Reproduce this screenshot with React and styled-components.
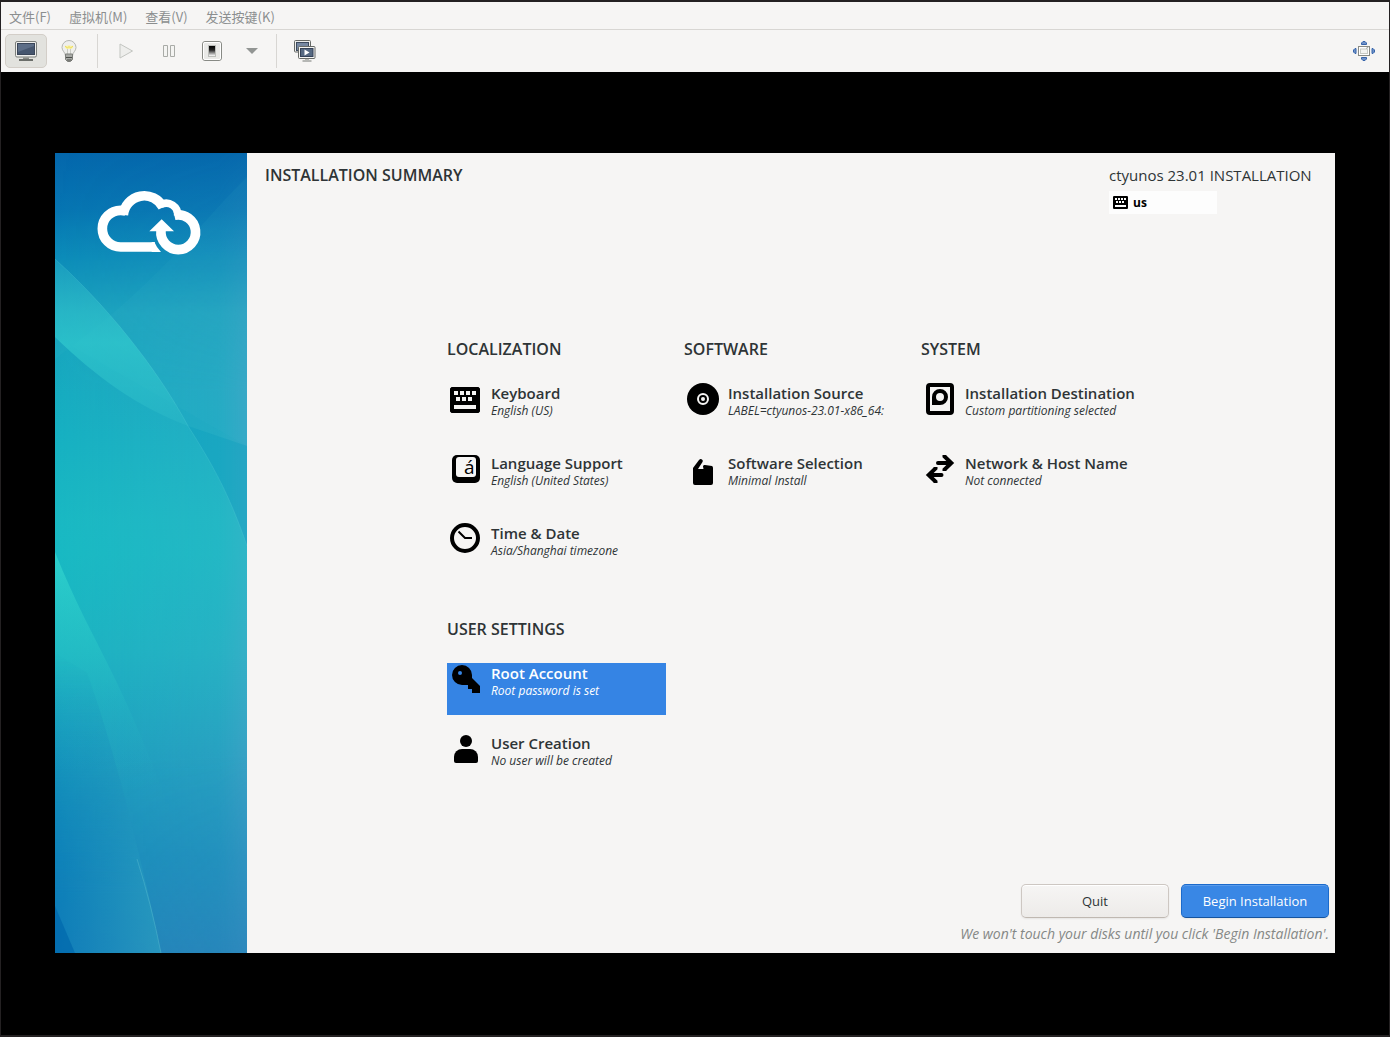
import React, { useState } from 'react';
import styled, { createGlobalStyle, ThemeProvider } from 'styled-components';

const theme = {
  colors: {
    frame: '#242122',
    surface: '#f6f5f4',
    border: '#d8d6d3',
    text: '#2e3436',
    textMuted: '#8b8e8f',
    hint: '#858886',
    primary: '#3584e4',
  },
  fonts: {
    ui: '"Open Sans", "Noto Sans", sans-serif',
    menu: '"Noto Sans CJK SC", sans-serif',
  },
};

const GlobalStyle = createGlobalStyle`
  *, *::before, *::after {
    box-sizing: border-box;
  }

  body {
    margin: 0;
    background-color: #000;
  }

  button {
    font-family: inherit;
    cursor: pointer;
  }

  svg {
    display: block;
    flex-shrink: 0;
  }
`;

const Window = styled.div`
  display: flex;
  flex-direction: column;
  min-height: 100vh;
  border: 1px solid ${props => props.theme.colors.frame};
  border-width: 2px 1px;
  background-color: #000;
  color: ${props => props.theme.colors.text};
  font-family: ${props => props.theme.fonts.ui};
`;

const MenuBar = styled.nav`
  display: flex;
  gap: 2px;
  height: 28px;
  border-bottom: 1px solid ${props => props.theme.colors.border};
  background-color: ${props => props.theme.colors.surface};
`;

const MenuItem = styled.button`
  padding: 2px 8px 0;
  border: none;
  background-color: transparent;
  color: ${props => props.theme.colors.textMuted};
  && {
    font-family: ${props => props.theme.fonts.menu};
  }
  font-size: 13px;
  line-height: 20px;
  white-space: nowrap;
`;

const ToolBar = styled.div`
  display: flex;
  align-items: center;
  gap: 1px;
  height: 42px;
  padding: 0 4px;
  background-color: ${props => props.theme.colors.surface};
`;

const ToolButton = styled.button`
  display: flex;
  align-items: center;
  justify-content: center;
  width: ${props => (props.$narrow ? '35px' : '42px')};
  height: 34px;
  padding: 0;
  border: 1px solid ${props => (props.$pressed ? '#d3cec8' : 'transparent')};
  border-radius: 5px;
  background-color: ${props => (props.$pressed ? '#e2e2de' : 'transparent')};
`;

const ToolSeparator = styled.div`
  width: 1px;
  height: 34px;
  margin: 0 6px;
  background-color: ${props => props.theme.colors.border};
`;

const Spacer = styled.div`
  flex: 1;
`;

const Display = styled.main`
  display: flex;
  flex: 1;
  padding: 81px 54px 82px;
  background-color: #000;
`;

const Installer = styled.section`
  display: flex;
  flex: 1;
  background-color: ${props => props.theme.colors.surface};
`;

const Brand = styled.aside`
  display: grid;
  flex: 0 0 192px;
  overflow: hidden;

  > * {
    grid-area: 1 / 1;
  }

  .art {
    width: 100%;
    height: 100%;
    min-height: 0;
  }

  .logo {
    margin: 36px 0 0 41px;
  }
`;

const Hub = styled.div`
  display: flex;
  flex: 1;
  flex-direction: column;
  min-width: 0;
`;

const HubHeader = styled.header`
  display: flex;
  justify-content: space-between;
  padding: 10px 18px 0;
`;

const HubTitle = styled.h1`
  margin: 0;
  font-size: 16px;
  font-weight: 600;
  line-height: 24px;
`;

const Product = styled.div`
  min-width: 208px;
  font-size: 15px;
  line-height: 24px;
`;

const LayoutIndicator = styled.button`
  display: flex;
  align-items: center;
  gap: 5px;
  width: 108px;
  height: 23px;
  margin-top: 4px;
  padding: 0 4px;
  border: none;
  background-color: #fdfdfd;
  color: #000;
  font-size: 12px;
  font-weight: 700;
`;

const Categories = styled.div`
  display: grid;
  grid-template-columns: repeat(3, 219px);
  justify-content: center;
  gap: 42px 18px;
  flex: 1;
  align-content: start;
  padding: 123px 0 24px 5px;
`;

const Category = styled.section`
  display: flex;
  flex-direction: column;
  gap: 18px;
`;

const CategoryTitle = styled.h2`
  margin: 0 0 4px;
  font-size: 16px;
  font-weight: 600;
  line-height: 24px;
`;

const Spoke = styled.button`
  display: flex;
  align-items: flex-start;
  gap: 9px;
  height: 52px;
  padding: 0 3px;
  border: none;
  background-color: ${props => (props.$selected ? props.theme.colors.primary : 'transparent')};
  color: ${props => (props.$selected ? '#fff' : props.theme.colors.text)};
  text-align: left;
`;

const SpokeText = styled.span`
  display: flex;
  flex-direction: column;
  min-width: 0;
  white-space: nowrap;
`;

const SpokeTitle = styled.span`
  font-size: 15px;
  font-weight: 600;
  line-height: 20px;
`;

const SpokeStatus = styled.span`
  font-size: 12px;
  font-style: italic;
  line-height: 16px;
`;

const HubFooter = styled.footer`
  display: flex;
  flex-direction: column;
  align-items: flex-end;
  gap: 6px;
  padding: 0 6px 9px;
`;

const Actions = styled.div`
  display: flex;
  gap: 12px;
`;

const ActionButton = styled.button`
  width: 148px;
  height: 34px;
  border: 1px solid ${props => (props.$primary ? '#1b6acb' : '#cdc7c2')};
  border-bottom-color: ${props => (props.$primary ? '#15539e' : '#bfb8b1')};
  border-radius: 5px;
  background: ${props => (props.$primary ? '#3987e5' : 'linear-gradient(#f6f5f4, #edebe9)')};
  box-shadow: inset 0 1px ${props => (props.$primary ? '#5a9bea' : '#fff')}, 0 1px 2px rgba(0, 0, 0, 0.07);
  color: ${props => (props.$primary ? '#fff' : props.theme.colors.text)};
  font-size: 13px;
`;

const Hint = styled.p`
  margin: 0;
  color: ${props => props.theme.colors.hint};
  font-size: 14px;
  font-style: italic;
  line-height: 20px;
`;

const MonitorIcon = () => (
  <svg width="24" height="22" viewBox="0 0 24 22">
    <rect x="1.5" y="1.5" width="21" height="15.5" rx="1.5" fill="#eeeeec" stroke="#7b7e7b" />
    <rect x="3.5" y="3.5" width="17" height="11" fill="#46566e" stroke="#3a4659" />
    <path d="M4 4H20V6L4 12Z" fill="#7486a0" opacity=".5" />
    <path d="M9 17.5H15V19H9Z" fill="#888a85" />
    <path d="M5 20H19" stroke="#6b6e6a" strokeWidth="2" />
  </svg>
);

const BulbIcon = () => (
  <svg width="18" height="24" viewBox="0 0 18 24">
    <path d="M9 1.5A7 7 0 0 0 2 8.5C2 12 5.5 13.5 5.5 17H12.5C12.5 13.5 16 12 16 8.5A7 7 0 0 0 9 1.5Z" fill="#efefed" stroke="#b4b6b2" />
    <path d="M4.5 8Q9 4.5 13.5 8L11.5 10H6.5Z" fill="#f9f3a5" />
    <path d="M5 7L7.5 9L9 7.5L10.5 9L13 7" fill="none" stroke="#ecd95a" />
    <path d="M7.5 10V16M10.5 10V16" stroke="#c9cbc6" />
    <path d="M5.5 15H12.5V20.5L10.5 22.5H7.5L5.5 20.5Z" fill="#a8aaa6" stroke="#7c7e7a" />
    <path d="M6 18.5H12M7 21H11.5" stroke="#4c4e4b" />
  </svg>
);

const PlayIcon = () => (
  <svg width="16" height="18" viewBox="0 0 16 18">
    <path d="M2 2L14.5 9L2 16Z" fill="#eeeeec" stroke="#c3c5c1" strokeLinejoin="round" />
  </svg>
);

const PauseIcon = () => (
  <svg width="14" height="14" viewBox="0 0 14 14">
    <path d="M1.5 1.5H5.5V12.5H1.5ZM8.5 1.5H12.5V12.5H8.5Z" fill="#f4f4f2" stroke="#a9aba7" />
  </svg>
);

const PowerIcon = () => (
  <svg width="22" height="22" viewBox="0 0 22 22">
    <defs>
      <linearGradient id="rocker" x1="0" y1="0" x2="0" y2="1">
        <stop offset="0" stopColor="#000" />
        <stop offset=".4" stopColor="#222" />
        <stop offset="1" stopColor="#fff" />
      </linearGradient>
    </defs>
    <rect x="1.5" y="1.5" width="19" height="19" rx="2.5" fill="#e9e9e7" stroke="#888a85" />
    <rect x="2.5" y="2.5" width="17" height="17" rx="1.5" fill="none" stroke="#fff" />
    <rect x="7.5" y="5.5" width="7" height="11" fill="#d3d5d1" stroke="#bbbdb9" />
    <rect x="8" y="6" width="6" height="10" fill="url(#rocker)" />
  </svg>
);

const CaretIcon = () => (
  <svg width="12" height="6" viewBox="0 0 12 6">
    <path d="M0 0H12L6 6Z" fill="#929593" />
  </svg>
);

const ScreensIcon = () => (
  <svg width="22" height="22" viewBox="0 0 22 22">
    <rect x=".5" y=".5" width="16" height="11.5" rx="1" fill="#eeeeec" stroke="#666966" />
    <rect x="2.5" y="2.5" width="12" height="8" fill="#7688a2" stroke="#3d4a5e" />
    <path d="M4 14.5H7" stroke="#777a76" />
    <rect x="4.5" y="6.5" width="16.5" height="12" rx="1" fill="#f5f5f3" stroke="#666966" />
    <rect x="6.5" y="8.5" width="12.5" height="8" fill="#566982" stroke="#344157" />
    <path d="M10.5 9.5L15.5 12.5L10.5 15.5Z" fill="#fff" />
    <path d="M11 19H15M8.5 21H17.5" stroke="#777a76" />
  </svg>
);

const FullscreenIcon = () => (
  <svg width="22" height="20" viewBox="0 0 22 20">
    <g fill="#6f91c8" stroke="#3764aa">
      <path d="M8.5 3.5V2L10 .5H12L13.5 2V3.5Z" />
      <path d="M8.5 16.5V18L10 19.5H12L13.5 18V16.5Z" />
      <path d="M3 7.5H2L.5 9V11L2 12.5H3Z" />
      <path d="M19 7.5H20L21.5 9V11L20 12.5H19Z" />
    </g>
    <rect x="5.5" y="5.5" width="11" height="9" fill="#fff" stroke="#888a85" />
    <rect x="7.5" y="8" width="7" height="4.5" fill="#f4f4f2" stroke="#c8cac4" />
    <path d="M13 7.5L15.5 6" stroke="#a5a8a2" />
  </svg>
);

const KeyboardIcon = ({ width = 30, height = 26 }) => (
  <svg width={width} height={height} viewBox="0 4 30 26">
    {icons.keyboard}
  </svg>
);

const SpokeIcon = ({ children }) => (
  <svg width="32" height="32" viewBox="0 0 32 32">{children}</svg>
);

const icons = {
  keyboard: (
    <path
      fillRule="evenodd"
      d="M1.5 4H28.5L30 5.5V28.5L28.5 30H1.5L0 28.5V5.5ZM4 8V12H8V8ZM10 8V12H14V8ZM16 8V12H20V8ZM22 8V12H26V8ZM6 14V18H10V14ZM12 14V18H16V14ZM18 14V18H22V14ZM4 22V26H26V22Z"
    />
  ),
  language: (
    <>
      <rect x="2" y="2" width="28" height="28" rx="5" />
      <rect x="6" y="4" width="20" height="20" rx="3" fill="#f6f5f4" />
      <text x="14" y="21" fontFamily="Open Sans, sans-serif" fontSize="19">á</text>
    </>
  ),
  clock: (
    <g fill="none" stroke="#000">
      <circle cx="15" cy="15" r="13" strokeWidth="4" />
      <path d="M8.5 8.5L15 15H22" strokeWidth="2" />
    </g>
  ),
  disc: (
    <>
      <circle cx="16" cy="16" r="16" />
      <circle cx="16" cy="16" r="5" fill="none" stroke="#f6f5f4" strokeWidth="2" />
      <circle cx="16" cy="16" r="2" fill="#f6f5f4" />
    </>
  ),
  software: (
    <path d="M6 15L12 7Q13.5 5.5 15 6.5Q16.5 7.5 15.5 9L11 16H16.5L16 13.5Q16 11.5 18 12L25 13Q26 13.5 26 15V30Q26 32 24 32H8Q6 32 6 30Z" />
  ),
  drive: (
    <>
      <rect x="4" y="2" width="24" height="28" rx="2" fill="none" stroke="#000" strokeWidth="4" />
      <path fillRule="evenodd" d="M8 22V14A8 8 0 1 1 16 22ZM16 10A4 4 0 1 0 16 18A4 4 0 1 0 16 10Z" />
    </>
  ),
  network: (
    <g fill="none" stroke="#000" strokeWidth="4">
      <path d="M14 10H26M6 22H17.5" strokeLinecap="round" />
      <path d="M20.5 2V3.5L27.3 10L20.5 16.5V18M11.5 14V15.5L4.7 22L11.5 28.5V30" />
    </g>
  ),
  key: (
    <path
      fillRule="evenodd"
      d="M12 2A10 10 0 0 1 22 12V15L30 23V30H22V26H18V22H12A10 10 0 0 1 12 2ZM10 8A2 2 0 1 0 10 12A2 2 0 1 0 10 8Z"
    />
  ),
  user: (
    <>
      <circle cx="16" cy="8" r="6" />
      <path d="M4 24A8 8 0 0 1 12 16H20A8 8 0 0 1 28 24V28Q28 30 26 30H6Q4 30 4 28Z" />
    </>
  ),
};

const BrandArt = () => (
  <svg className="art" viewBox="0 0 192 800" preserveAspectRatio="none" aria-hidden="true">
    <defs>
      <linearGradient id="base" x1="0" y1="0" x2="0" y2="1">
        <stop offset="0" stopColor="#0467ac" />
        <stop offset=".07" stopColor="#0675b2" />
        <stop offset=".13" stopColor="#0c8cb9" />
        <stop offset=".2" stopColor="#19a3be" />
        <stop offset=".35" stopColor="#13acc1" />
        <stop offset=".5" stopColor="#13b5c2" />
        <stop offset=".62" stopColor="#19afc1" />
        <stop offset=".74" stopColor="#1a9fbe" />
        <stop offset=".88" stopColor="#188dbb" />
        <stop offset="1" stopColor="#2183b9" />
      </linearGradient>
      <linearGradient id="haze">
        <stop offset="0" stopColor="#5fa9ce" stopOpacity="0" />
        <stop offset=".85" stopColor="#5fa9ce" stopOpacity=".2" />
        <stop offset="1" stopColor="#6da5d0" stopOpacity=".38" />
      </linearGradient>
      <linearGradient id="hazeFade" x1="0" y1="0" x2="0" y2="1">
        <stop offset="0" stopColor="#fff" stopOpacity=".1" />
        <stop offset=".3" stopColor="#fff" />
        <stop offset=".75" stopColor="#fff" />
        <stop offset="1" stopColor="#fff" stopOpacity=".5" />
      </linearGradient>
      <linearGradient id="upperBand" x1="0" y1="0" x2="0" y2="1">
        <stop offset="0" stopColor="#35bdcb" stopOpacity=".3" />
        <stop offset=".5" stopColor="#35d0d0" stopOpacity=".6" />
        <stop offset="1" stopColor="#35c8cc" stopOpacity=".3" />
      </linearGradient>
      <linearGradient id="lowerBand" x1="0" y1="0" x2="0" y2="1">
        <stop offset="0" stopColor="#35d8cf" stopOpacity=".7" />
        <stop offset=".4" stopColor="#2bc9c8" stopOpacity=".4" />
        <stop offset="1" stopColor="#1f9abf" stopOpacity="0" />
      </linearGradient>
      <linearGradient id="foot" x1="0" y1="0" x2="1" y2="0">
        <stop offset="0" stopColor="#0679b8" stopOpacity=".65" />
        <stop offset="1" stopColor="#2b9fc0" stopOpacity=".65" />
      </linearGradient>
      <linearGradient id="footFade" x1="0" y1="0" x2="0" y2="1">
        <stop offset="0" stopColor="#fff" stopOpacity="0" />
        <stop offset=".8" stopColor="#fff" />
      </linearGradient>
      <linearGradient id="core" x1="0" y1="0" x2="0" y2="1">
        <stop offset="0" stopColor="#25c4c6" stopOpacity="0" />
        <stop offset=".4" stopColor="#25c4c6" stopOpacity=".35" />
        <stop offset="1" stopColor="#25c4c6" stopOpacity="0" />
      </linearGradient>
      <mask id="footMask">
        <rect y="500" width="192" height="300" fill="url(#footFade)" />
      </mask>
      <mask id="hazeMask">
        <rect width="192" height="800" fill="url(#hazeFade)" />
      </mask>
    </defs>
    <rect width="192" height="800" fill="url(#base)" />
    <path d="M192 24C140 75 110 125 0 206V184L192 293Z" fill="#4cc8cf" opacity=".07" />
    <rect width="192" height="800" fill="url(#haze)" mask="url(#hazeMask)" />
    <path d="M0 184C40 223 82 254 133 273C156 309 174 340 192 393V640H0Z" fill="url(#core)" />
    <path d="M0 106C66 166 110 230 133 273C82 254 40 223 0 184Z" fill="url(#upperBand)" />
    <path d="M133 273L192 293V393C174 340 156 309 133 273Z" fill="#079dbd" opacity=".3" />
    <path d="M0 106C66 166 110 230 133 273C156 309 174 340 192 393" fill="none" stroke="#68dce1" strokeOpacity=".2" />
    <path d="M0 399C20 450 42 488 63 532C82 572 98 612 116 660L0 660Z" fill="url(#lowerBand)" />
    <path d="M0 500L32 520C58 590 90 720 106 800H0Z" fill="url(#foot)" mask="url(#footMask)" />
    <path d="M82 706Q96 750 106 800" fill="none" stroke="#5ec0d2" strokeOpacity=".4" />
    <path d="M0 753L20 800H0Z" fill="#0068ad" opacity=".7" />
  </svg>
);

const CloudLogo = () => (
  <svg className="logo" width="106" height="67" viewBox="123 116 318 201" role="img" aria-label="ctyunos">
    <g fill="none" stroke="#fff" strokeWidth="29">
      <path d="M300 290H197A55 55 0 0 1 197 180Q206 180 214 183" />
      <path d="M205 194A63 63 0 0 1 324 171" />
      <path d="M317 163A34.5 34.5 0 0 1 368 197" strokeWidth="23" />
      <path d="M358 195A52 52 0 1 1 318 240" />
    </g>
    <path d="M298 275Q305 292 318 305H290V275ZM320 207L357 243H283Z" fill="#fff" />
  </svg>
);

const menus = ['文件(F)', '虚拟机(M)', '查看(V)', '发送按键(K)'];

const categories = [
  {
    title: 'LOCALIZATION',
    spokes: [
      { id: 'keyboard', title: 'Keyboard', status: 'English (US)', icon: 'keyboard' },
      { id: 'language', title: 'Language Support', status: 'English (United States)', icon: 'language' },
      { id: 'time', title: 'Time & Date', status: 'Asia/Shanghai timezone', icon: 'clock' },
    ],
  },
  {
    title: 'SOFTWARE',
    spokes: [
      { id: 'source', title: 'Installation Source', status: 'LABEL=ctyunos-23.01-x86_64:', icon: 'disc' },
      { id: 'packages', title: 'Software Selection', status: 'Minimal Install', icon: 'software' },
    ],
  },
  {
    title: 'SYSTEM',
    spokes: [
      { id: 'storage', title: 'Installation Destination', status: 'Custom partitioning selected', icon: 'drive' },
      { id: 'network', title: 'Network & Host Name', status: 'Not connected', icon: 'network' },
    ],
  },
  {
    title: 'USER SETTINGS',
    spokes: [
      { id: 'root', title: 'Root Account', status: 'Root password is set', icon: 'key' },
      { id: 'user', title: 'User Creation', status: 'No user will be created', icon: 'user' },
    ],
  },
];

const App = () => {
  const [selected, setSelected] = useState('root');

  return (
    <ThemeProvider theme={theme}>
      <GlobalStyle />
      <Window>
        <MenuBar>
          {menus.map(label => (
            <MenuItem key={label}>{label}</MenuItem>
          ))}
        </MenuBar>

        <ToolBar>
          <ToolButton $pressed aria-label="Console"><MonitorIcon /></ToolButton>
          <ToolButton aria-label="Details"><BulbIcon /></ToolButton>
          <ToolSeparator />
          <ToolButton aria-label="Run"><PlayIcon /></ToolButton>
          <ToolButton aria-label="Pause"><PauseIcon /></ToolButton>
          <ToolButton aria-label="Shut down"><PowerIcon /></ToolButton>
          <ToolButton $narrow aria-label="Shut down options"><CaretIcon /></ToolButton>
          <ToolSeparator />
          <ToolButton aria-label="Snapshots"><ScreensIcon /></ToolButton>
          <Spacer />
          <ToolButton aria-label="Fullscreen"><FullscreenIcon /></ToolButton>
        </ToolBar>

        <Display>
          <Installer>
            <Brand>
              <BrandArt />
              <CloudLogo />
            </Brand>

            <Hub>
              <HubHeader>
                <HubTitle>INSTALLATION SUMMARY</HubTitle>
                <Product>
                  ctyunos 23.01 INSTALLATION
                  <LayoutIndicator>
                    <KeyboardIcon width={15} height={13} />
                    us
                  </LayoutIndicator>
                </Product>
              </HubHeader>

              <Categories>
                {categories.map(category => (
                  <Category key={category.title}>
                    <CategoryTitle>{category.title}</CategoryTitle>
                    {category.spokes.map(spoke => (
                      <Spoke
                        key={spoke.id}
                        $selected={selected === spoke.id}
                        onClick={() => setSelected(spoke.id)}
                      >
                        <SpokeIcon>{icons[spoke.icon]}</SpokeIcon>
                        <SpokeText>
                          <SpokeTitle>{spoke.title}</SpokeTitle>
                          <SpokeStatus>{spoke.status}</SpokeStatus>
                        </SpokeText>
                      </Spoke>
                    ))}
                  </Category>
                ))}
              </Categories>

              <HubFooter>
                <Actions>
                  <ActionButton>Quit</ActionButton>
                  <ActionButton $primary>Begin Installation</ActionButton>
                </Actions>
                <Hint>We won't touch your disks until you click 'Begin Installation'.</Hint>
              </HubFooter>
            </Hub>
          </Installer>
        </Display>
      </Window>
    </ThemeProvider>
  );
};

export default App;
